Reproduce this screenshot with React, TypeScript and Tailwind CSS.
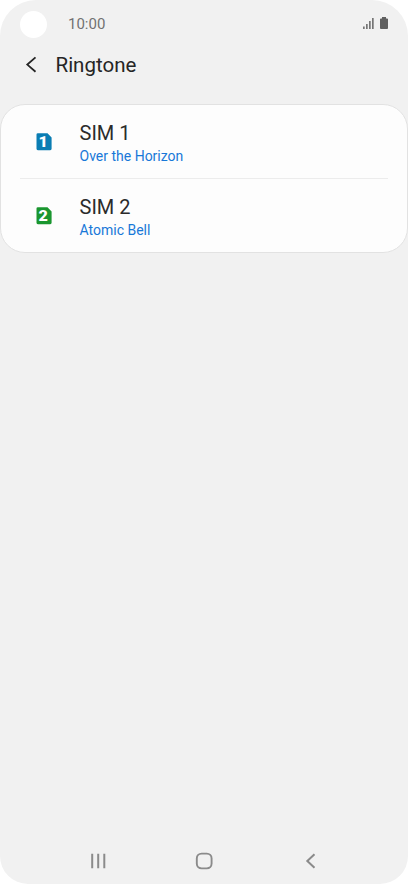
type Sim = {
  slot: number;
  ringtone: string;
  color: string;
};

const sims: Sim[] = [
  { slot: 1, ringtone: "Over the Horizon", color: "text-[#0a7db3]" },
  { slot: 2, ringtone: "Atomic Bell", color: "text-[#1a962f]" },
];

function SimIcon({ slot, color }: { slot: number; color: string }) {
  return (
    <span
      className={`relative flex h-[18px] w-4 items-center justify-center ${color}`}
    >
      <svg viewBox="0 0 16 18" className="absolute inset-0 h-full w-full">
        <path
          d="M1.900 .2H11.500L15.600 4.400V15.800a1.400 1.400 0 0 1-1.400 1.400H1.900A1.400 1.400 0 0 1 .5 15.800V1.600A1.400 1.400 0 0 1 1.900 .2Z"
          fill="currentColor"
        />
      </svg>
      <span className="relative scale-x-115 text-[14px] leading-[18px] font-black text-white">
        {slot}
      </span>
    </span>
  );
}

function StatusBar() {
  return (
    <div className="flex h-[48px] items-center pr-5 pl-5">
      <span className="h-[27px] w-[27px] rounded-full bg-white" />
      <span className="ml-[21px] text-[15px] leading-5 text-[#717171]">
        10:00
      </span>
      <svg
        width="27"
        height="14"
        viewBox="0 0 27 14"
        className="mb-[2px] ml-auto"
        fill="#606060"
      >
        <path
          d="M2 10.500h1.700V13H2zM5 8h1.700v5H5zM8 5h1.700v8H8zM11 2h1.700v11H11z"
          opacity=".85"
        />
        <path d="M21 1h4v1.400h1.100q.9 0 .9.9v8.800q0 .9-.9.9h-6.200q-.9 0-.9-.9V3.300q0-.9.9-.9H21z" />
      </svg>
    </div>
  );
}

function SimRow({ sim }: { sim: Sim }) {
  return (
    <li className="flex h-[74px] items-center pl-[34.500px]">
      <SimIcon slot={sim.slot} color={sim.color} />
      <div className="ml-7 pt-[3px]">
        <p className="text-[20px] leading-6 text-[#2b2b2b]">SIM {sim.slot}</p>
        <p className="text-[14px] leading-[22px] text-[#1878d8]">
          {sim.ringtone}
        </p>
      </div>
    </li>
  );
}

function NavBar() {
  return (
    <nav className="mt-auto flex h-[46px] items-center justify-between px-[90px]">
      <svg
        width="16"
        height="16"
        viewBox="0 0 16 16"
        stroke="#8b8b8b"
        strokeWidth="2"
      >
        <path d="M2.200 .7v14.600M8.200 .7v14.600M14.300 .7v14.600" />
      </svg>
      <svg
        width="18"
        height="18"
        viewBox="0 0 18 18"
        fill="none"
        stroke="#8b8b8b"
        strokeWidth="1.9"
      >
        <rect x="1.800" y="1.600" width="14.800" height="14.800" rx="4.800" />
      </svg>
      <svg
        width="16"
        height="16"
        viewBox="0 0 16 16"
        fill="none"
        stroke="#8b8b8b"
        strokeWidth="2"
      >
        <path d="M12.500 1.200L5.300 8l7.200 6.800" />
      </svg>
    </nav>
  );
}

export default function App() {
  return (
    <div className="h-[884px] w-[408px] bg-white font-['Roboto','Noto_Sans',sans-serif]">
      <div className="flex h-full flex-col overflow-hidden rounded-t-[36px] rounded-b-[28px] bg-[#f1f1f1]">
        <StatusBar />
        <header className="flex h-[34px] items-center pl-[25px]">
          <svg
            width="12"
            height="18"
            viewBox="0 0 12 18"
            fill="none"
            stroke="#252525"
            strokeWidth="1.800"
          >
            <path d="M10.500 1.400L2.300 8.600l8.200 7.200" />
          </svg>
          <h1 className="ml-[18.500px] text-[20.500px] leading-7 text-[#252525]">
            Ringtone
          </h1>
        </header>
        <ul className="mt-[22px] h-[149px] rounded-[25px] border border-[#e2e2e2] bg-[#fdfdfd]">
          <SimRow sim={sims[0]} />
          <li className="mx-[19px] -mt-px h-px bg-[#ececec]" />
          <SimRow sim={sims[1]} />
        </ul>
        <NavBar />
      </div>
    </div>
  );
}
